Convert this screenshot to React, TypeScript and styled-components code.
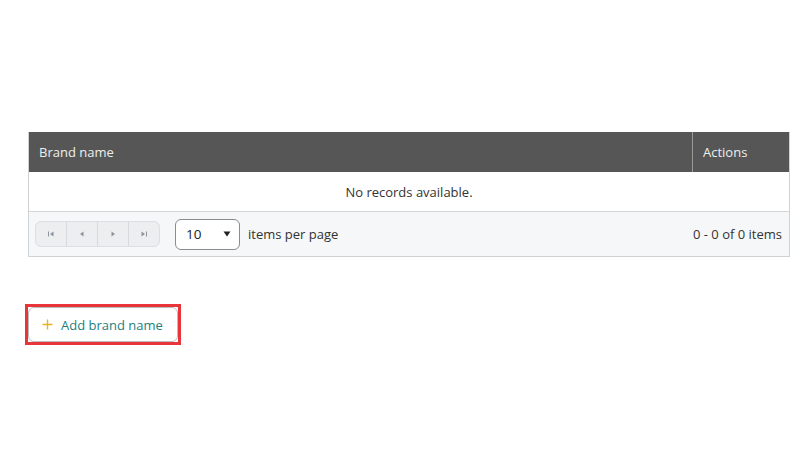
import React from "react";
import styled, { createGlobalStyle } from "styled-components";

const Global = createGlobalStyle`
  html, body { margin: 0; padding: 0; background: #ffffff; }
  body { font-family: "Open Sans", "Noto Sans", sans-serif; color: #333; }
`;

const Page = styled.div`
  width: 812px;
  height: 457px;
  padding: 132px 22px 0 28px;
  box-sizing: border-box;
  display: flex;
  flex-direction: column;
`;

const Grid = styled.div`
  width: 762px;
  border: 1px solid #cfd2d4;
  border-top: none;
  box-sizing: border-box;
  display: grid;
  grid-template-columns: 1fr 97px;
`;

const HeadCell = styled.div<{ $divider?: boolean }>`
  height: 40px;
  background: #565656;
  color: #eeeeee;
  font-size: 13px;
  display: flex;
  align-items: center;
  padding-left: 10px;
  border-left: ${(p) => (p.$divider ? "1px solid #9a9a9a" : "none")};
  box-sizing: border-box;
`;

const EmptyRow = styled.div`
  grid-column: 1 / -1;
  height: 40px;
  display: flex;
  align-items: center;
  justify-content: center;
  font-size: 13px;
  color: #333;
  border-bottom: 1px solid #d4d6d8;
  box-sizing: border-box;
`;

const Pager = styled.div`
  grid-column: 1 / -1;
  height: 44px;
  background: #f6f7f8;
  display: flex;
  align-items: center;
  padding: 0 7px 0 6px;
  font-size: 13px;
  color: #333;
`;

const NavGroup = styled.div`
  display: flex;
  height: 26px;
  border: 1px solid #dcdfe2;
  border-radius: 6px;
  background: #eceef0;
  overflow: hidden;
  box-sizing: border-box;
`;

const NavButton = styled.div<{ $first?: boolean }>`
  width: 30px;
  display: flex;
  align-items: center;
  justify-content: center;
  border-left: ${(p) => (p.$first ? "none" : "1px solid #d7dadd")};
  color: #9aa0a6;
`;

const Select = styled.div`
  margin-left: 15px;
  width: 65px;
  height: 31px;
  border: 1px solid #8c8c8c;
  border-radius: 6px;
  background: #fff;
  box-sizing: border-box;
  display: flex;
  align-items: center;
  justify-content: space-between;
  padding: 0 8px 0 10px;
  font-size: 13.5px;
  color: #222;
`;

const PerPage = styled.span`
  margin-left: 8px;
`;

const Info = styled.span`
  margin-left: auto;
`;

const AddWrap = styled.div`
  margin-top: 47px;
  margin-left: -3px;
  align-self: flex-start;
  border: 3px solid #e8343b;
`;

const AddButton = styled.button`
  display: flex;
  align-items: center;
  gap: 8px;
  height: 35px;
  width: 150px;
  padding: 0 0 0 13px;
  border: 1px solid #bdbdbd;
  border-radius: 6px;
  background: #fff;
  color: #1e7f7d;
  font-family: "Open Sans", "Noto Sans", sans-serif;
  font-size: 13px;
  box-sizing: border-box;
  cursor: pointer;
`;

const Icon = ({ kind }: { kind: "first" | "prev" | "next" | "last" }) => (
  <svg width="8" height="8" viewBox="0 0 8 8" fill="#8d949b">
    {kind === "first" && (
      <>
        <rect x="1" y="1.5" width="1" height="5" />
        <polygon points="6.5,1.5 6.5,6.5 3,4" />
      </>
    )}
    {kind === "prev" && <polygon points="5.5,1.5 5.5,6.5 2,4" />}
    {kind === "next" && <polygon points="2.5,1.5 2.5,6.5 6,4" />}
    {kind === "last" && (
      <>
        <polygon points="1.5,1.5 1.5,6.5 5,4" />
        <rect x="6" y="1.5" width="1" height="5" />
      </>
    )}
  </svg>
);

const PlusIcon = () => (
  <svg width="11" height="11" viewBox="0 0 11 11">
    <path d="M5.5 0.5v10M0.5 5.5h10" stroke="#e6b422" strokeWidth="1.4" />
  </svg>
);

export default function App() {
  return (
    <>
      <Global />
      <Page>
        <Grid>
          <HeadCell>Brand name</HeadCell>
          <HeadCell $divider>Actions</HeadCell>
          <EmptyRow>No records available.</EmptyRow>
          <Pager>
            <NavGroup>
              <NavButton $first>
                <Icon kind="first" />
              </NavButton>
              <NavButton>
                <Icon kind="prev" />
              </NavButton>
              <NavButton>
                <Icon kind="next" />
              </NavButton>
              <NavButton>
                <Icon kind="last" />
              </NavButton>
            </NavGroup>
            <Select>
              <span>10</span>
              <svg width="8" height="6" viewBox="0 0 8 6">
                <polygon points="0.5,0.5 7.5,0.5 4,5.5" fill="#222" />
              </svg>
            </Select>
            <PerPage>items per page</PerPage>
            <Info>0 - 0 of 0 items</Info>
          </Pager>
        </Grid>
        <AddWrap>
          <AddButton>
            <PlusIcon />
            Add brand name
          </AddButton>
        </AddWrap>
      </Page>
    </>
  );
}
